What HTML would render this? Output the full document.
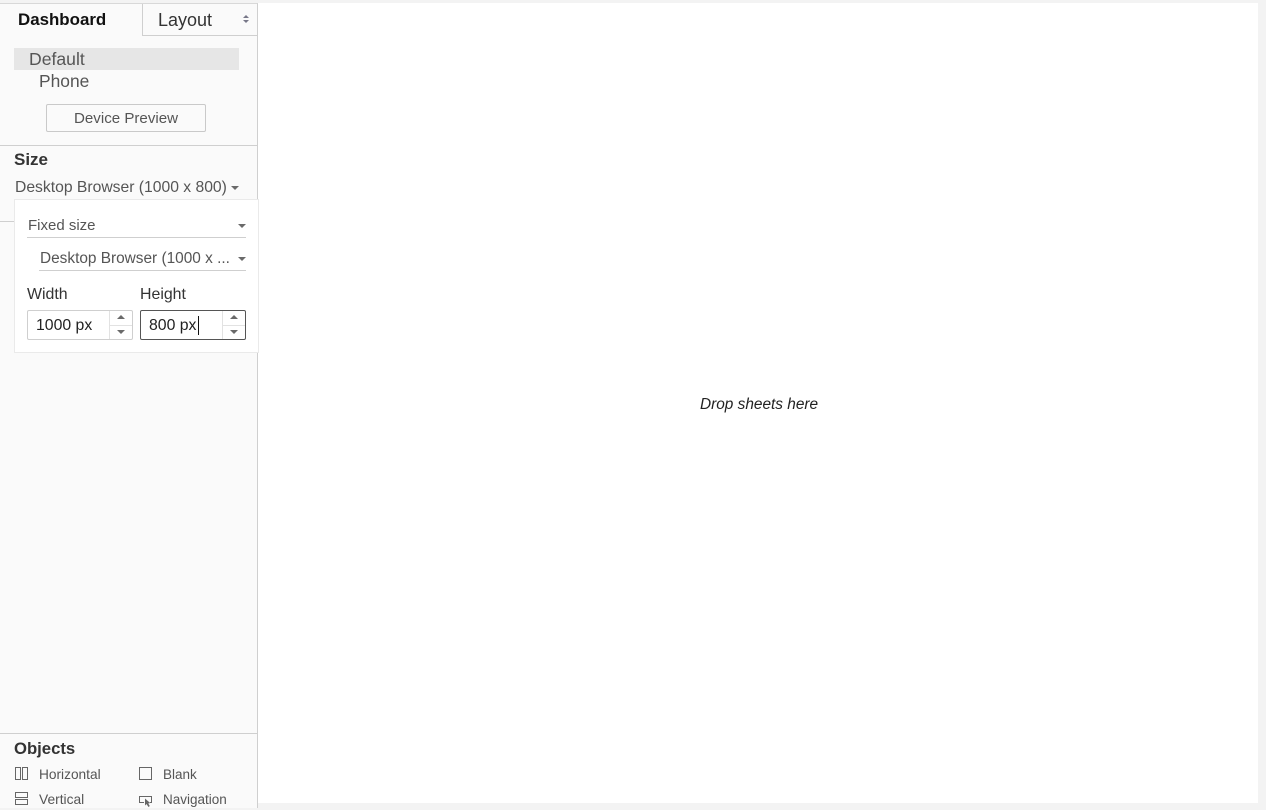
<!DOCTYPE html>
<html><head><meta charset="utf-8"><style>
html,body{margin:0;padding:0}
body{width:1266px;height:808px;background:#f3f3f3;position:relative;overflow:hidden;font-family:"Liberation Sans",sans-serif;color:#4f4f4f}
.a{position:absolute;box-sizing:border-box}
.t{position:absolute;white-space:nowrap;line-height:20px;height:20px}
.tri{position:absolute;width:0;height:0;border-left:4px solid transparent;border-right:4px solid transparent;border-top:4px solid #6a6a6a}
.up{position:absolute;width:0;height:0;border-left:4px solid transparent;border-right:4px solid transparent;border-bottom:4px solid #6a6a6a}
</style></head><body>
<div class="a" style="left:0;top:3px;width:258px;height:805px;background:#fafafa;border-right:1px solid #cfcfcf;border-top:1px solid #d8d8d8"></div>
<div class="a" style="left:258px;top:3px;width:1000px;height:800px;background:#fff"></div>

<div class="a" style="left:142px;top:4px;width:115px;height:32px;border-left:1px solid #cfcfcf;border-bottom:1px solid #cfcfcf;background:#fafafa"></div>
<div class="t" style="left:18px;top:10px;font-size:16.9px;font-weight:bold;color:#111">Dashboard</div>
<div class="t" style="left:158px;top:10px;font-size:18px;color:#333">Layout</div>
<div class="up" style="left:243px;top:15px;border-left-width:3px;border-right-width:3px;border-bottom-width:3px;border-bottom-color:#778"></div>
<div class="tri" style="left:243px;top:20px;border-left-width:3px;border-right-width:3px;border-top-width:3px;border-top-color:#778"></div>

<div class="a" style="left:14px;top:48px;width:225px;height:22px;background:#e6e6e6"></div>
<div class="t" style="left:29px;top:49px;font-size:17.6px;color:#555">Default</div>
<div class="t" style="left:39px;top:71px;font-size:17.4px;color:#555">Phone</div>
<div class="a" style="left:46px;top:104px;width:160px;height:28px;border:1px solid #c9c9c9;border-radius:2px;background:#fafafa"></div>
<div class="t" style="left:74px;top:109px;font-size:15.1px;color:#555">Device Preview</div>
<div class="a" style="left:0;top:145px;width:257px;height:1px;background:#cfcfcf"></div>

<div class="t" style="left:14px;top:150px;font-size:17px;font-weight:bold;color:#333">Size</div>
<div class="t" style="left:15px;top:178px;font-size:15.7px;color:#555">Desktop Browser (1000 x 800)</div>
<div class="tri" style="left:231px;top:186px"></div>
<div class="a" style="left:0;top:221px;width:15px;height:1px;background:#cfcfcf"></div>

<div class="a" style="left:14px;top:199px;width:245px;height:154px;background:#fff;border:1px solid #eaeaea"></div>
<div class="t" style="left:28px;top:216px;font-size:15px;color:#555">Fixed size</div>
<div class="tri" style="left:238px;top:224px"></div>
<div class="a" style="left:27px;top:237px;width:219px;height:1px;background:#cfcfcf"></div>
<div class="t" style="left:40px;top:249px;font-size:15.4px;color:#555">Desktop Browser (1000 x ...</div>
<div class="tri" style="left:238px;top:257px"></div>
<div class="a" style="left:39px;top:270px;width:207px;height:1px;background:#cfcfcf"></div>

<div class="t" style="left:27px;top:285px;font-size:15.9px;color:#333">Width</div>
<div class="t" style="left:140px;top:285px;font-size:15.9px;color:#333">Height</div>

<div class="a" style="left:27px;top:310px;width:106px;height:30px;border:1px solid #cfcfcf;border-radius:2px;background:#fff"></div>
<div class="a" style="left:109px;top:311px;width:1px;height:28px;background:#e2e2e2"></div>
<div class="a" style="left:110px;top:325px;width:22px;height:1px;background:#e2e2e2"></div>
<div class="up" style="left:117px;top:315px"></div>
<div class="tri" style="left:117px;top:330px"></div>
<div class="t" style="left:36px;top:316px;font-size:15.8px;color:#222">1000 px</div>

<div class="a" style="left:140px;top:310px;width:106px;height:30px;border:1px solid #555;border-radius:2px;background:#fff"></div>
<div class="a" style="left:222px;top:311px;width:1px;height:28px;background:#e2e2e2"></div>
<div class="a" style="left:223px;top:325px;width:22px;height:1px;background:#e2e2e2"></div>
<div class="up" style="left:230px;top:315px"></div>
<div class="tri" style="left:230px;top:330px"></div>
<div class="t" style="left:149px;top:316px;font-size:15.8px;color:#222">800 px</div>
<div class="a" style="left:198px;top:316px;width:1px;height:19px;background:#111"></div>

<div class="t" style="left:700px;top:395px;font-size:15.4px;font-style:italic;color:#222">Drop sheets here</div>

<div class="a" style="left:0;top:733px;width:257px;height:1px;background:#cfcfcf"></div>
<div class="t" style="left:14px;top:739px;font-size:16.7px;font-weight:bold;color:#333">Objects</div>

<svg class="a" style="left:0;top:760px" width="258" height="48" fill="none" stroke="#666" stroke-width="1">
<rect x="15.5" y="7.5" width="5" height="12"/><rect x="22.5" y="7.5" width="5" height="12"/>
<rect x="139.5" y="7.5" width="12" height="12"/>
<rect x="15.5" y="32.5" width="12" height="5"/><rect x="15.5" y="39.5" width="12" height="5"/>
<path d="M144 42.5H139.5V36.5H151.5V42.5H150"/><path d="M145 38.5L145 45.5L146.500 44L148.500 47L149.800 46L148.200 43.500L150.200 43Z" fill="#666" stroke="none"/>
</svg>
<div class="t" style="left:39px;top:765px;font-size:13.7px;color:#555">Horizontal</div>
<div class="t" style="left:163px;top:765px;font-size:13.5px;color:#555">Blank</div>
<div class="t" style="left:39px;top:790px;font-size:13.8px;color:#555">Vertical</div>
<div class="t" style="left:163px;top:790px;font-size:13.5px;color:#555">Navigation</div>
</body></html>
